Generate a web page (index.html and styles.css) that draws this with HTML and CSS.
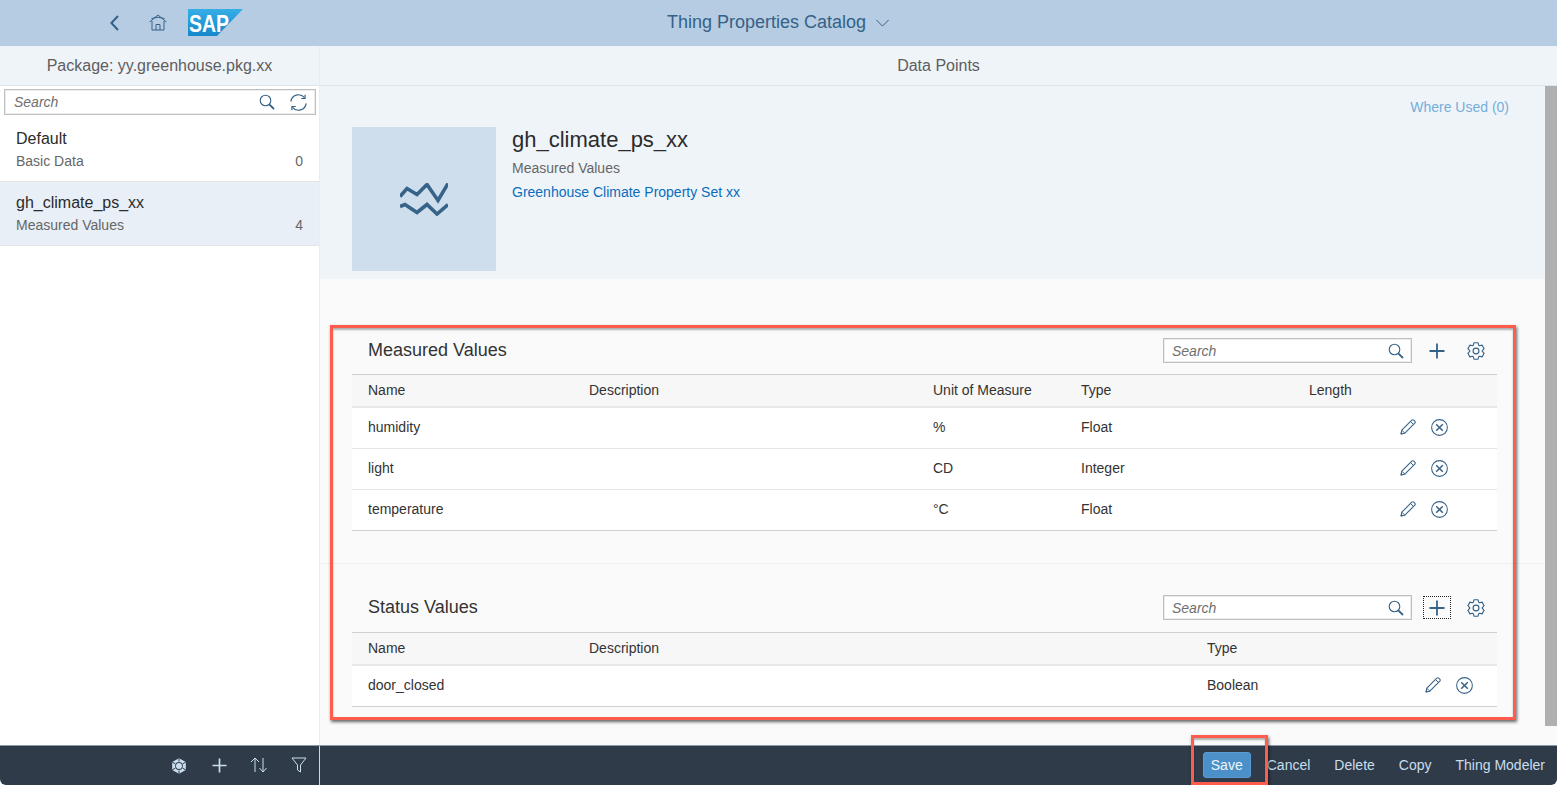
FILE: index.html
```html
<!DOCTYPE html>
<html lang="en">
<head>
<meta charset="utf-8">
<title>Thing Properties Catalog</title>
<link rel="stylesheet" href="styles.css">
</head>
<body>
<svg class="defs" width="0" height="0" aria-hidden="true">
  <defs>
    <linearGradient id="sap-blue" x1="0" y1="0" x2="0" y2="1"><stop offset="0" stop-color="#35aee6"/><stop offset="1" stop-color="#1687cb"/></linearGradient>
  </defs>
  <symbol id="i-search" viewBox="0 0 16 16"><circle cx="6.5" cy="6.5" r="5.3" fill="none" stroke="currentColor" stroke-width="1.1"/><path d="M10.3 10.3L15 15" fill="none" stroke="currentColor" stroke-width="1.8"/></symbol>
  <symbol id="i-refresh" viewBox="0 0 16 16"><path d="M.8 7.2A7.2 7.2 0 0 1 13.6 3.5M15.2 8.8A7.2 7.2 0 0 1 2.4 12.500" fill="none" stroke="currentColor" stroke-width="1.1"/><path d="M14.200 .6V4.200H10.600M1.800 15.400V11.800H5.400" fill="none" stroke="currentColor" stroke-width="1.1"/></symbol>
  <symbol id="i-plus" viewBox="0 0 16 16"><path d="M8 .5V15.500M.5 8H15.500" fill="none" stroke="currentColor" stroke-width="1.8"/></symbol>
  <symbol id="i-gear" viewBox="0 0 16 16"><path d="M6.19 .72L9.81 .72L10.45 2.97L11.13 3.36L13.39 2.79L15.21 5.93L13.59 7.61L13.59 8.39L15.21 10.07L13.39 13.21L11.13 12.64L10.45 13.03L9.81 15.28L6.19 15.28L5.55 13.03L4.87 12.64L2.61 13.21L.79 10.07L2.41 8.39L2.41 7.61L.79 5.93L2.61 2.79L4.87 3.36L5.55 2.97Z" fill="none" stroke="currentColor" stroke-width="1" stroke-linejoin="round"/><circle cx="8" cy="8" r="2.6" fill="none" stroke="currentColor" stroke-width="1"/></symbol>
  <symbol id="i-pencil" viewBox="0 0 16 16"><path d="M1 15L1.8 11.2L11.8 1.2C12.4 .7 13.2 .7 13.8 1.2L14.8 2.2C15.3 2.8 15.3 3.6 14.8 4.2L4.8 14.2Z" fill="none" stroke="currentColor" stroke-width="1.1" stroke-linejoin="round"/><path d="M1.8 11.2L4.8 14.2M1 15L2.6 14.6L1.4 13.4Z" fill="none" stroke="currentColor" stroke-width="1"/><path d="M10.6 2.6L13.4 5.4" fill="none" stroke="currentColor" stroke-width="1"/></symbol>
  <symbol id="i-cancel" viewBox="0 0 16 16"><circle cx="8" cy="8" r="7.4" fill="none" stroke="currentColor" stroke-width="1"/><path d="M4.9 4.9L11.1 11.1M11.1 4.9L4.9 11.1" fill="none" stroke="currentColor" stroke-width="1.4"/></symbol>
</svg>

<div class="app">
  <header class="shell">
    <div class="shell-left">
      <svg class="back" viewBox="0 0 9 16"><path d="M8 1L1.4 8L8 15" fill="none" stroke="currentColor" stroke-width="2"/></svg>
      <svg class="home" viewBox="0 0 18 17"><path d="M.6 8L9 1L17.4 8M2.500 4.500L9 3.200L15.500 4.500" fill="none" stroke="currentColor" stroke-width="1"/><path d="M3 7V16H15V7" fill="none" stroke="currentColor" stroke-width="1"/><path d="M7 16V10.5H11V16" fill="none" stroke="currentColor" stroke-width="1"/></svg>
      <svg class="logo" viewBox="0 0 55 27">
        <polygon points="0,0 55,0 29,27 0,27" fill="url(#sap-blue)"/>
        <text x="1" y="23" class="logo-text" textLength="40" lengthAdjust="spacingAndGlyphs">SAP</text>
      </svg>
    </div>
    <div class="shell-title">
      <span>Thing Properties Catalog</span>
      <svg class="caret" viewBox="0 0 16 9"><path d="M1 1L8 8L15 1" fill="none" stroke="currentColor" stroke-width="1.1"/></svg>
    </div>
    <div></div>
  </header>

  <div class="main">
    <aside class="master">
      <div class="bar">Package: yy.greenhouse.pkg.xx</div>
      <div class="master-search">
        <div class="search search-master">
          <span class="placeholder">Search</span>
          <svg class="ico-search"><use href="#i-search"/></svg>
          <svg class="ico-refresh"><use href="#i-refresh"/></svg>
        </div>
      </div>
      <div class="item">
        <div class="item-title">Default</div>
        <div class="item-sub"><span>Basic Data</span><span>0</span></div>
      </div>
      <div class="item item-selected">
        <div class="item-title">gh_climate_ps_xx</div>
        <div class="item-sub"><span>Measured Values</span><span>4</span></div>
      </div>
    </aside>

    <section class="detail">
      <div class="bar bar-detail">Data Points</div>
      <div class="detail-body">
        <div class="scroll">
          <div class="object">
            <div class="tile">
              <svg class="tile-icon" viewBox="0 0 48 33"><path d="M0 13.500L7 5.500L17 11.500L27 1.500L38 17.500L48 .5" fill="none" stroke="currentColor" stroke-width="3.600"/><path d="M0 23.500L5 21.500L17 29.500L27 21.500L37 31L48 21.500" fill="none" stroke="currentColor" stroke-width="3.600"/></svg>
            </div>
            <div class="object-info">
              <h1>gh_climate_ps_xx</h1>
              <div class="object-sub">Measured Values</div>
              <a class="object-link">Greenhouse Climate Property Set xx</a>
            </div>
            <a class="where">Where Used (0)</a>
          </div>

          <div class="block block-first">
            <div class="toolbar">
              <h2>Measured Values</h2>
              <div class="search search-table"><span class="placeholder">Search</span><svg class="ico-search"><use href="#i-search"/></svg></div>
              <span class="tool"><svg class="ico-plus"><use href="#i-plus"/></svg></span>
              <span class="tool"><svg class="ico-gear"><use href="#i-gear"/></svg></span>
            </div>
            <div class="table table-measured">
              <div class="row head"><span>Name</span><span>Description</span><span>Unit of Measure</span><span>Type</span><span>Length</span><span></span></div>
              <div class="row"><span>humidity</span><span></span><span>%</span><span>Float</span><span></span><span class="actions"><svg><use href="#i-pencil"/></svg><svg><use href="#i-cancel"/></svg></span></div>
              <div class="row"><span>light</span><span></span><span>CD</span><span>Integer</span><span></span><span class="actions"><svg><use href="#i-pencil"/></svg><svg><use href="#i-cancel"/></svg></span></div>
              <div class="row"><span>temperature</span><span></span><span>°C</span><span>Float</span><span></span><span class="actions"><svg><use href="#i-pencil"/></svg><svg><use href="#i-cancel"/></svg></span></div>
            </div>
          </div>

          <div class="block block-second">
            <div class="toolbar">
              <h2>Status Values</h2>
              <div class="search search-table"><span class="placeholder">Search</span><svg class="ico-search"><use href="#i-search"/></svg></div>
              <span class="tool tool-focus"><svg class="ico-plus"><use href="#i-plus"/></svg></span>
              <span class="tool"><svg class="ico-gear"><use href="#i-gear"/></svg></span>
            </div>
            <div class="table table-status">
              <div class="row head"><span>Name</span><span>Description</span><span>Type</span><span></span></div>
              <div class="row"><span>door_closed</span><span></span><span>Boolean</span><span class="actions"><svg><use href="#i-pencil"/></svg><svg><use href="#i-cancel"/></svg></span></div>
            </div>
          </div>
        </div>
        <div class="scrollbar"><div class="thumb"></div></div>
      </div>
    </section>
  </div>

  <footer class="footer">
    <div class="footer-left">
      <span class="foot-icon">
        <svg class="ico-hex" viewBox="0 0 16 16"><path d="M8 .3L14.800 4V12L8 15.700L1.200 12V4Z" fill="currentColor"/><path d="M8 .3V3.500M14.800 4L11.800 5.800M14.800 12L11.800 10.200M8 15.700V12.500M1.200 12L4.200 10.200M1.200 4L4.200 5.800" stroke="#2f3b48" stroke-width="1"/><circle cx="8" cy="8" r="3.900" fill="#2f3b48"/><circle cx="8" cy="8" r="3" fill="currentColor"/></svg>
      </span>
      <span class="foot-icon"><svg class="ico-foot-plus"><use href="#i-plus"/></svg></span>
      <span class="foot-icon">
        <svg class="ico-sort" viewBox="0 0 18 16"><path d="M5 15V1M1 5L5 1L9 5" fill="none" stroke="currentColor" stroke-width="1"/><path d="M13 1V15M9.500 11L13 15L16.500 11" fill="none" stroke="currentColor" stroke-width="1"/></svg>
      </span>
      <span class="foot-icon">
        <svg class="ico-filter" viewBox="0 0 16 16"><path d="M1 1H15L9.500 8V15L6.500 13V8Z" fill="none" stroke="currentColor" stroke-width="1"/></svg>
      </span>
    </div>
    <div class="footer-right">
      <span class="btn-save">Save</span>
      <span class="btn">Cancel</span>
      <span class="btn">Delete</span>
      <span class="btn">Copy</span>
      <span class="btn">Thing Modeler</span>
    </div>
  </footer>

  <div class="mark mark-tables"></div>
  <div class="mark mark-save"></div>
</div>
</body>
</html>
```
FILE: styles.css
```css
* { box-sizing: border-box; }
html, body { margin: 0; padding: 0; background: #fff; }
body { font-family: "Liberation Sans", Arial, sans-serif; font-size: 14px; color: #333; overflow: hidden; }
.defs { position: absolute; }
svg { display: block; }
h1, h2 { margin: 0; font-weight: 400; }

.app { position: relative; width: 1557px; height: 785px; display: flex; flex-direction: column; }

/* Shell header */
.shell { height: 46px; flex: none; background: #b6cce3; color: #346187; display: grid; grid-template-columns: 1fr auto 1fr; align-items: center; }
.shell-left { display: flex; align-items: center; padding-left: 110px; }
.back { width: 9px; height: 16px; margin-right: 31px; }
.home { width: 18px; height: 17px; margin-right: 21px; margin-left: -1px; margin-top: -1px; }
.logo { width: 55px; height: 27px; margin-top: -1px; }
.logo-text { font: 700 24px "Liberation Sans", Arial, sans-serif; fill: #fff; }
.shell-title { display: flex; align-items: center; gap: 9px; font-size: 18px; padding-bottom: 2px; }
.caret { width: 15px; height: 8px; margin-top: 2px; }

/* Main split */
.main { flex: 1; min-height: 0; display: flex; }
.master { width: 320px; flex: none; background: #fff; border-right: 1px solid #ececec; }
.bar { height: 40px; background: #eff4f9; border-bottom: 1px solid #dce6f1; display: flex; align-items: center; justify-content: center; font-size: 16px; color: #5e5e5e; }
.master-search { height: 33px; padding: 3px 3px 4px 4px; }
.search { display: flex; align-items: center; background: #fff; border: 1px solid #bfbfbf; box-shadow: inset 0 0 0 1px #ececec; color: #346187; }
.placeholder { flex: 1; font-style: italic; color: #6f6f6f; }
.search-master { width: 312px; height: 26px; padding: 0 8px 0 9px; }
.ico-search { width: 16px; height: 16px; }
.ico-refresh { width: 17px; height: 17px; margin-left: 15px; }
.item { height: 63px; padding: 11px 16px 0; border-bottom: 1px solid #e5e5e5; }
.item-selected { height: 64px; padding-top: 12px; background: #e8eff7; }
.item-title { font-size: 16px; line-height: 18px; color: #2b2b2b; }
.item-sub { display: flex; justify-content: space-between; margin-top: 4px; line-height: 18px; color: #666; }

.detail { flex: 1; min-width: 0; display: flex; flex-direction: column; }
.bar-detail { width: 100%; flex: none; }
.detail-body { flex: 1; min-height: 0; display: flex; }
.scroll { flex: 1; min-width: 0; background: #fafafa; }
.scrollbar { width: 12px; flex: none; background: #fafafa; }
.thumb { height: 640px; background: #b0b0b0; }

/* Object header */
.object { position: relative; height: 193px; background: #eff4f9; padding: 41px 0 0 32px; display: flex; align-items: flex-start; }
.tile { width: 144px; height: 144px; background: #cedeed; color: #386389; display: flex; align-items: center; justify-content: center; }
.tile-icon { width: 48px; height: 33px; }
.object-info { margin-left: 16px; flex: 1; }
.object-info h1 { font-size: 22px; line-height: 26px; color: #2b2b2b; }
.object-sub { margin-top: 6px; line-height: 18px; color: #666; }
.object-link { display: block; margin-top: 6px; line-height: 18px; color: #0a6ebd; }
.where { color: #75aedb; margin: -29px 36px 0 0; line-height: 18px; }

/* Tables */
.block-first { height: 285px; padding: 59px 48px 0 32px; border-bottom: 1px solid #f0f0f0; }
.block-second { padding: 31px 48px 0 32px; }
.toolbar { height: 36px; display: flex; align-items: flex-start; color: #346187; }
.block-second .toolbar { height: 37px; }
.toolbar h2 { flex: 1; font-size: 18px; line-height: 24px; color: #333; padding-left: 16px; }
.search-table { width: 249px; height: 25px; padding: 0 7px 0 8px; margin-right: 11px; }
.tool { width: 28px; height: 23px; margin-top: 1px; margin-right: 11px; display: flex; align-items: center; justify-content: center; }
.tool:last-child { margin-right: 7px; }
.tool-focus { outline: 1px dotted #222; outline-offset: -1px; }
.ico-plus { width: 16px; height: 16px; }
.ico-gear { width: 18px; height: 18px; }

.table { border-top: 1px solid #cfcfcf; }
.row { display: grid; height: 41px; padding-bottom: 2px; align-items: center; background: #fff; border-bottom: 1px solid #e5e5e5; }
.row:last-child { border-bottom-color: #d0d0d0; }
.row > span { padding-left: 16px; white-space: nowrap; }
.row.head { height: 33px; background: #f7f7f7; border-bottom: 2px solid #e8e8e8; }
.table-measured .row { grid-template-columns: 221px 344px 148px 228px 100px 104px; }
.table-status .row { grid-template-columns: 221px 618px 110px 196px; }
.row > .actions { display: flex; justify-content: flex-end; align-items: center; gap: 15px; color: #386389; padding: 0 49px 0 0; }
.table-status .row > .actions { padding-right: 24px; }
.actions svg { width: 16px; height: 16px; }
.actions svg:last-child { width: 17px; height: 17px; }

/* Footer */
.footer { height: 40px; flex: none; background: #2f3b48; color: #c9deef; display: flex; border-top: 1px solid #8c99a6; border-radius: 0 0 6px 6px; }
.footer-left { width: 320px; flex: none; display: flex; justify-content: flex-end; border-right: 1px solid #cfd6dc; }
.foot-icon { width: 40px; display: flex; align-items: center; justify-content: center; }
.ico-hex { width: 16px; height: 16px; }
.ico-foot-plus { width: 15px; height: 15px; }
.ico-sort { width: 18px; height: 16px; margin-top: -1px; }
.ico-filter { width: 16px; height: 16px; margin-top: -1px; }
.footer-right { flex: 1; display: flex; justify-content: flex-end; align-items: center; padding: 0 12px 2px 0; gap: 24px; }
.btn-save { width: 48px; height: 26px; margin-right: -8px; border-radius: 3px; background: #4c90c9; border: 1px solid #5a9cd2; color: #eef5fb; display: flex; align-items: center; justify-content: center; }

/* Red annotation frames over the screenshot */
.mark { position: absolute; border: 3px solid #ff5c4d; box-shadow: 1px 2px 3px rgba(0, 0, 0, .6), inset 0 2px 2px rgba(0, 0, 0, .3); pointer-events: none; }
.mark-tables { left: 330px; top: 325px; width: 1186px; height: 395px; }
.mark-save { left: 1191px; top: 735px; width: 77px; height: 50px; }
```
